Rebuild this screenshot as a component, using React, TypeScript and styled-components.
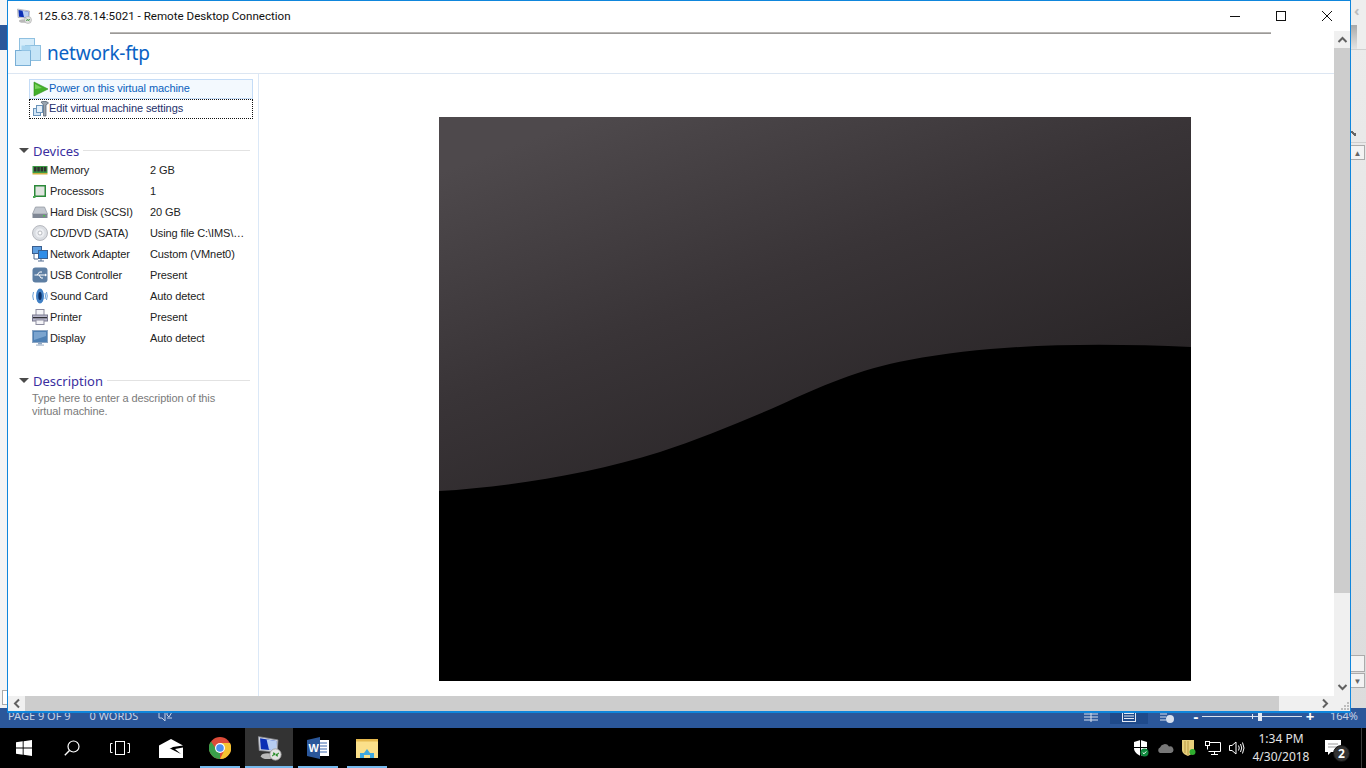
import React, { FC, ReactNode } from "react";
import styled, { createGlobalStyle } from "styled-components";

const GlobalStyle = createGlobalStyle`
    html, body { margin: 0; padding: 0; background: #000; }
    #root { width: 1366px; height: 768px; overflow: hidden; }
    * { box-sizing: border-box; }
`;

/* ---------- small drawings ---------- */

const Svg: FC<{ s?: number; w?: number; h?: number; children: ReactNode }> = ({ s = 16, w, h, children }) => (
    <svg width={w ?? s} height={h ?? s} viewBox={`0 0 ${w ?? s} ${h ?? s}`} style={{ display: "block", flex: "none" }}>
        {children}
    </svg>
);

const RdpIcon: FC<{ s?: number }> = ({ s = 16 }) => (
    <svg width={s} height={s} viewBox="0 0 32 32" style={{ display: "block", flex: "none" }}>
        <path d="M3 2 L27 6 L26 21 L4 19 Z" fill="#d5d9e2" stroke="#8d8f96" />
        <path d="M5 4 L25 7.5 L24.5 19 L6 17.5 Z" fill="#0a2fb5" />
        <path d="M13 5.5 L25 7.5 L24.5 19 L16 18 Z" fill="#b7cdf1" />
        <ellipse cx="14" cy="26" rx="8" ry="3.5" fill="#b9b9b9" />
        <circle cx="24" cy="24" r="7" fill="#e3e3e3" stroke="#9a9a9a" />
        <path d="M20 26 L23 23 M21 22 L23 23 L23 25 M28 22 L25 25 M27 26 L25 25 L25 23" stroke="#2f8f2f" strokeWidth="1.4" fill="none" />
    </svg>
);

const VmIcon = () => (
    <Svg w={28} h={30}>
        <rect x="5.5" y="1.5" width="15" height="15" fill="#d5ecfa" stroke="#8fc0e0" />
        <rect x="11.5" y="8.5" width="15" height="15" fill="#c5e4f7" stroke="#8fc0e0" />
        <rect x="1.5" y="13.5" width="15" height="15" fill="#cbe7f8" stroke="#79afd6" />
        <rect x="7.5" y="8.5" width="9" height="5" fill="#a9d5f0" />
    </Svg>
);

const PlayIcon = () => (
    <Svg>
        <path d="M1 1 L15 8 L1 15 Z" fill="#43b02a" stroke="#2f8f1b" strokeWidth="0.6" />
        <path d="M2 3 L9 7 L2 8 Z" fill="#79d25d" />
    </Svg>
);

const SettingsIcon = () => (
    <Svg>
        <rect x="0.5" y="7.5" width="7" height="7" fill="#cfe4f5" stroke="#6a93ba" />
        <rect x="3.5" y="4.5" width="6" height="7" fill="#e4f0fa" stroke="#6a93ba" />
        <path d="M8 1 C 10 0 14 0 15.5 2 L13 4 L13 15 L10.5 15 L10.5 4 Z" fill="#98a4b0" stroke="#4d5a68" strokeWidth="0.7" />
    </Svg>
);

const MemoryIcon = () => (
    <Svg>
        <rect x="0.5" y="4" width="15" height="7" fill="#3c9a45" />
        <rect x="2" y="5" width="2.5" height="4.5" fill="#303030" />
        <rect x="5.3" y="5" width="2.5" height="4.5" fill="#303030" />
        <rect x="8.6" y="5" width="2.5" height="4.5" fill="#303030" />
        <rect x="11.9" y="5" width="2.5" height="4.5" fill="#303030" />
        <rect x="0.5" y="11" width="15" height="1.5" fill="#d0b040" />
    </Svg>
);

const CpuIcon = () => (
    <Svg>
        <rect x="2" y="2" width="12" height="12" fill="#2c8a3a" />
        <rect x="3.5" y="3.5" width="9" height="9" fill="#e0e4e0" />
        <rect x="1" y="13" width="2.5" height="2" fill="#48a850" />
    </Svg>
);

const DiskIcon = () => (
    <Svg>
        <path d="M3.5 3 L12.5 3 L15.5 10 L0.5 10 Z" fill="#c3c8d0" stroke="#8d939c" strokeWidth="0.7" />
        <rect x="0.5" y="10" width="15" height="4" fill="#7f8794" />
        <rect x="11" y="11" width="2" height="1.5" fill="#4fc04f" />
    </Svg>
);

const CdIcon = () => (
    <Svg>
        <circle cx="8" cy="8" r="7.5" fill="#dadde2" stroke="#a0a4aa" strokeWidth="0.7" />
        <circle cx="8" cy="8" r="4.5" fill="#eceef2" />
        <circle cx="8" cy="8" r="2" fill="#fff" stroke="#a0a4aa" strokeWidth="0.7" />
    </Svg>
);

const NetworkIcon = () => (
    <Svg>
        <rect x="0.5" y="0.5" width="9" height="7" fill="#5f9fe0" stroke="#3a5f90" />
        <rect x="6.5" y="4.5" width="9" height="8" fill="#2f8de8" stroke="#3a5f90" />
        <path d="M2 8 L2 13 L6 13 M9 13 L9 15 M6 15 L12 15" stroke="#506a90" fill="none" />
    </Svg>
);

const UsbIcon = () => (
    <Svg>
        <rect x="0.5" y="0.5" width="15" height="15" rx="3" fill="#5d7ea3" />
        <path d="M2.5 8 L13 8 M5 8 L7.5 5 L10 5 M7 8 L9 11 L11 11" stroke="#fff" strokeWidth="1" fill="none" />
        <path d="M13 6.5 L15 8 L13 9.5 Z" fill="#fff" />
    </Svg>
);

const SoundIcon = () => (
    <Svg>
        <ellipse cx="8" cy="8" rx="4" ry="7.5" fill="#3f7fc4" />
        <ellipse cx="8" cy="8" rx="1.7" ry="4" fill="#0c2f66" />
        <path d="M1.5 4 Q 0 8 1.5 12 M14.5 4 Q 16 8 14.5 12 M13 5 Q 14 8 13 11" stroke="#6aa0d8" fill="none" />
    </Svg>
);

const PrinterIcon = () => (
    <Svg>
        <rect x="4" y="0.5" width="8" height="6" fill="#f4f4f8" stroke="#8d8da0" />
        <rect x="0.5" y="6" width="15" height="6" fill="#b9b8cc" stroke="#7a7a90" />
        <rect x="1" y="8" width="14" height="1.3" fill="#303038" />
        <rect x="4" y="11" width="8" height="4.5" fill="#f4f4f8" stroke="#8d8da0" />
    </Svg>
);

const DisplayIcon = () => (
    <Svg>
        <rect x="0.5" y="0.5" width="15" height="12" fill="#4f80b4" stroke="#8ca6c4" />
        <path d="M2 2 L14 2 L14 6 L2 10 Z" fill="#7ba4cf" />
        <rect x="6" y="13" width="4" height="1.5" fill="#8ca6c4" />
        <rect x="4" y="14.5" width="8" height="1.2" fill="#a8b8cc" />
    </Svg>
);

/* scrollbar chevron, dir is the way it points */
const Chevron: FC<{ dir: "up" | "down" | "left" | "right" }> = ({ dir }) => {
    const rotate = { up: 0, right: 90, down: 180, left: 270 }[dir];
    return (
        <svg width="11" height="11" viewBox="0 0 11 11" style={{ display: "block", transform: `rotate(${rotate}deg)` }}>
            <path d="M1.5 8 L5.5 4 L9.5 8" stroke="#606060" strokeWidth="2" fill="none" />
        </svg>
    );
};

/* ---------- page shell ---------- */

const Screen = styled.div`
    position: relative;
    width: 1366px;
    height: 768px;
    display: flex;
    flex-direction: column;
    overflow: hidden;
    font-family: "Noto Sans", "Open Sans", sans-serif;
`;

const WordArea = styled.div`
    flex: 1;
    display: flex;
    justify-content: space-between;
    background: #f1f1f1;
`;

const WordLeft = styled.div`
    width: 7px;
    display: flex;
    flex-direction: column;
    background: #f4f4f4;
`;

const WordTabStrip = styled.div`
    height: 25px;
    background: #f6f6f6;
`;

const WordBlueBand = styled.div`
    height: 25px;
    background: #2b579a;
    margin-bottom: 640px;
`;

const WordSideBox = styled.div`
    height: 15px;
    margin-left: 2px;
    border: 1px solid #ababab;
    border-right: 0;
    background: #fff;
`;

const WordRight = styled.div`
    width: 15px;
    display: flex;
    flex-direction: column;
    background: linear-gradient(#ececec, #dcdcdc);
`;

const WordRibbon = styled.div`
    height: 50px;
    flex: none;
    position: relative;
    border-bottom: 1px solid #d0d0d0;
    background: #eeeeee;
`;

const RibbonBar = styled.div`
    position: absolute;
    left: 0;
    top: 25px;
    width: 6px;
    height: 24px;
    background: linear-gradient(#a9a9a9, #e4e4e4);
`;

const RibbonMark = styled.div`
    position: absolute;
    left: 3px;
    top: 3px;
    color: #bdbdbd;
    font-size: 15px;
    font-weight: 700;
    line-height: 14px;
`;

const ResizeTick = styled.div`
    width: 5px;
    height: 5px;
    margin-top: 81px;
    flex: none;
    background: linear-gradient(45deg, transparent 30%, #666 30%, #666 70%, transparent 70%);
`;

const WordGroupRule = styled.div`
    height: 1px;
    margin-top: 6px;
    flex: none;
    background: #cfcfcf;
`;

const WordSpinBox = styled.div<{ $top: number; $h: number }>`
    height: ${(p) => p.$h}px;
    flex: none;
    margin-top: ${(p) => p.$top}px;
    margin-right: 1px;
    border: 1px solid #ababab;
    border-left: 0;
    background: #f3f3f3;
    display: flex;
    align-items: center;
    justify-content: center;
    color: #666;
    font-size: 8px;
`;

const StatusBar = styled.div`
    height: 20px;
    flex: none;
    display: flex;
    align-items: center;
    background: #2b579a;
    color: #c6d3e8;
    font-size: 11px;
    padding: 0 0 5px 8px;
    position: relative;
`;

const StatusText = styled.span<{ $gap: number }>`
    margin-right: ${(p) => p.$gap}px;
    white-space: nowrap;
`;

const StatusRight = styled.div`
    margin-left: auto;
    display: flex;
    align-items: center;
    height: 16px;
    margin-top: 1px;
    padding-right: 8px;
`;

const ViewBtn = styled.div<{ $on?: boolean }>`
    width: 38px;
    height: 16px;
    display: flex;
    align-items: center;
    justify-content: center;
    background: ${(p) => (p.$on ? "#1f4a8a" : "transparent")};
`;

const ZoomLabel = styled.span`
    margin-left: 14px;
    font-size: 11px;
    line-height: 16px;
`;

const ZoomTrack = styled.div`
    position: relative;
    width: 100px;
    height: 1px;
    margin-right: 2px;
    background: #d9e2f0;
`;

const ZoomThumb = styled.div<{ $x: number; $w: number; $h: number }>`
    position: absolute;
    left: ${(p) => p.$x}px;
    top: ${(p) => -Math.floor(p.$h / 2)}px;
    width: ${(p) => p.$w}px;
    height: ${(p) => p.$h}px;
    background: #e4eaf4;
`;

const ZoomSign = styled.span<{ $lead?: number }>`
    color: #fff;
    font-size: 15px;
    font-weight: 700;
    line-height: 16px;
    width: 12px;
    margin-left: ${(p) => p.$lead ?? 0}px;
    text-align: center;
`;

/* ---------- remote desktop window ---------- */

const RemoteWindow = styled.div`
    position: absolute;
    left: 7px;
    top: 0;
    width: 1344px;
    height: 713px;
    border: 1px solid #0f86dc;
    border-width: 1px 1px 2px 1px;
    background: #fff;
    display: flex;
    flex-direction: column;
`;

const TitleBar = styled.div`
    height: 30px;
    flex: none;
    display: flex;
    align-items: center;
    padding-left: 8px;
    color: #111;
    font-family: "Roboto", "Noto Sans", sans-serif;
    font-size: 11.6px;
`;

const TitleText = styled.span`
    margin-left: 6px;
    white-space: nowrap;
`;

const WindowControls = styled.div`
    margin-left: auto;
    display: flex;
`;

const WindowControl = styled.div`
    width: 46px;
    height: 30px;
    display: flex;
    align-items: center;
    justify-content: center;
`;

const ConnectionBarShadow = styled.div`
    position: absolute;
    left: 102px;
    top: 31px;
    width: 1161px;
    height: 2px;
    background: linear-gradient(#c9c7c4, #8c8a88);
`;

const Remote = styled.div`
    flex: 1;
    min-height: 0;
    display: flex;
`;

const VmPane = styled.div`
    flex: 1;
    min-width: 0;
    display: flex;
    flex-direction: column;
`;

const VmHeader = styled.div`
    height: 43px;
    flex: none;
    display: flex;
    align-items: center;
    padding-left: 6px;
    border-bottom: 1px solid #dce6f2;
`;

const VmTitle = styled.h1`
    margin: 2px 0 0 5px;
    font-size: 19px;
    font-weight: 400;
    color: #0a62c4;
    letter-spacing: -0.2px;
`;

const VmBody = styled.div`
    flex: 1;
    min-height: 0;
    display: flex;
`;

const Sidebar = styled.div`
    width: 251px;
    flex: none;
    border-right: 1px solid #dbe8f7;
    padding: 5px 5px 0 21px;
    font-family: "Liberation Sans", Arial, sans-serif;
    font-size: 11px;
    letter-spacing: -0.1px;
    color: #222;
`;

const Command = styled.div<{ $hover?: boolean }>`
    height: 20px;
    display: flex;
    align-items: center;
    padding-left: 3px;
    border: 1px ${(p) => (p.$hover ? "solid #c4dcf7" : "dotted #111")};
    background: ${(p) => (p.$hover ? "#f3f9fe" : "#fff")};
    color: ${(p) => (p.$hover ? "#0a5fbd" : "#222f6b")};
`;

const CommandLabel = styled.span`
    white-space: nowrap;
    margin-bottom: 3px;
`;

const SectionHead = styled.div<{ $top: number }>`
    display: flex;
    align-items: center;
    margin: ${(p) => p.$top}px 3px 0 -10px;
    height: 17px;
`;

const SectionArrow = styled.div`
    width: 0;
    height: 0;
    border-style: solid;
    border-width: 5px 5px 0 5px;
    border-color: #4a4a4a transparent transparent transparent;
`;

const SectionName = styled.span`
    margin: 0 4px;
    font-family: "Noto Sans", sans-serif;
    font-size: 13px;
    letter-spacing: 0;
    color: #3a2fa0;
`;

const SectionRule = styled.div`
    flex: 1;
    height: 1px;
    background: #e2e2e2;
`;

const DeviceList = styled.div`
    margin: 0;
`;

const DeviceRow = styled.div`
    height: 21px;
    display: flex;
    align-items: center;
    padding-left: 3px;
    color: #222;
`;

const DeviceName = styled.span`
    width: 100px;
    margin-left: 2px;
    white-space: nowrap;
`;

const DeviceValue = styled.span`
    white-space: nowrap;
`;

const Description = styled.p`
    margin: 3px 0 0 3px;
    width: 200px;
    font-size: 11px;
    line-height: 13px;
    color: #7a7a7a;
`;

const Stage = styled.div`
    flex: 1;
    min-width: 0;
    padding: 43px 0 0 180px;
`;

const VScroll = styled.div`
    width: 16px;
    flex: none;
    display: flex;
    flex-direction: column;
    background: #f0f0f0;
`;

const VThumb = styled.div`
    height: 545px;
    background: #cdcdcd;
`;

const ScrollBtn = styled.div`
    height: 17px;
    display: flex;
    align-items: center;
    justify-content: center;
    background: #f0f0f0;
`;

const VTrack = styled.div`
    flex: 1;
`;

const HScroll = styled.div`
    height: 15px;
    flex: none;
    display: flex;
    background: #f0f0f0;
`;

const HBtn = styled.div`
    width: 17px;
    display: flex;
    align-items: center;
    justify-content: center;
`;

const HThumb = styled.div`
    width: 1254px;
    background: #cdcdcd;
`;

const HTrack = styled.div`
    flex: 1;
`;

const Gripper = styled.div`
    width: 16px;
    display: flex;
    align-items: flex-end;
    justify-content: flex-end;
`;

/* ---------- taskbar ---------- */

const Taskbar = styled.div`
    height: 40px;
    flex: none;
    display: flex;
    background: #000;
    color: #ddd;
`;

const TaskCell = styled.div<{ $active?: boolean; $open?: boolean }>`
    position: relative;
    width: 48px;
    height: 40px;
    display: flex;
    align-items: center;
    justify-content: center;
    background: ${(p) => (p.$active ? "#333" : "transparent")};
    &::after {
        content: "";
        display: ${(p) => (p.$open ? "block" : "none")};
        position: absolute;
        bottom: 0;
        left: ${(p) => (p.$active ? 0 : 4)}px;
        right: ${(p) => (p.$active ? 0 : 4)}px;
        height: 2px;
        background: #76b9ed;
    }
`;

const TaskList = styled.div`
    display: flex;
    gap: 1px;
    margin-left: 3px;
`;

const Tray = styled.div`
    margin-left: auto;
    display: flex;
    align-items: center;
`;

const TrayIcon = styled.div`
    width: 24px;
    height: 40px;
    display: flex;
    align-items: center;
    justify-content: center;
`;

const Clock = styled.div`
    width: 64px;
    text-align: center;
    font-size: 12px;
    line-height: 18px;
    color: #e4e4e4;
    white-space: nowrap;
`;

const Notify = styled.div`
    position: relative;
    width: 40px;
    height: 40px;
    display: flex;
    align-items: center;
    justify-content: center;
`;

const NotifyBadge = styled.div`
    position: absolute;
    left: 20px;
    top: 17px;
    width: 17px;
    height: 17px;
    border-radius: 50%;
    background: #333;
    border: 1px solid #111;
    color: #fff;
    font-size: 12px;
    font-weight: 700;
    line-height: 15px;
    text-align: center;
`;

const ShowDesktop = styled.div`
    width: 13px;
    height: 40px;
    padding-left: 8px;
    &::before {
        content: "";
        display: block;
        width: 1px;
        height: 40px;
        background: #3a3a3a;
    }
`;

const devices: { icon: ReactNode; name: string; value: string }[] = [
    { icon: <MemoryIcon />, name: "Memory", value: "2 GB" },
    { icon: <CpuIcon />, name: "Processors", value: "1" },
    { icon: <DiskIcon />, name: "Hard Disk (SCSI)", value: "20 GB" },
    { icon: <CdIcon />, name: "CD/DVD (SATA)", value: "Using file C:\\IMS\\…" },
    { icon: <NetworkIcon />, name: "Network Adapter", value: "Custom (VMnet0)" },
    { icon: <UsbIcon />, name: "USB Controller", value: "Present" },
    { icon: <SoundIcon />, name: "Sound Card", value: "Auto detect" },
    { icon: <PrinterIcon />, name: "Printer", value: "Present" },
    { icon: <DisplayIcon />, name: "Display", value: "Auto detect" },
];

const App: FC = () => (
    <Screen>
        <GlobalStyle />
        <WordArea>
            <WordLeft>
                <WordTabStrip />
                <WordBlueBand />
                <WordSideBox />
            </WordLeft>
            <WordRight>
                <WordRibbon>
                    <RibbonMark>‹</RibbonMark>
                    <RibbonBar />
                </WordRibbon>
                <ResizeTick />
                <WordGroupRule />
                <WordSpinBox $top={2} $h={15}>▲</WordSpinBox>
                <WordSpinBox $top={495} $h={17}></WordSpinBox>
                <WordSpinBox $top={1} $h={15}>▼</WordSpinBox>
            </WordRight>
        </WordArea>

        <StatusBar>
            <StatusText $gap={19}>PAGE 9 OF 9</StatusText>
            <StatusText $gap={20}>0 WORDS</StatusText>
            <Svg w={15} h={14}>
                <path d="M1 1 L1 9 L4 9 L7 12 L7 1 Z M9 1 L9 6 L11 8 L14 3 M9 9 L14 9" stroke="#c6d3e8" fill="none" />
            </Svg>
            <StatusRight>
                <ViewBtn>
                    <Svg w={14} h={12}>
                        <path d="M0 1 H14 M0 4 H14 M0 7 H14 M0 10 H14 M7 0 V12" stroke="#d7e0ee" fill="none" />
                    </Svg>
                </ViewBtn>
                <ViewBtn $on>
                    <Svg w={14} h={12}>
                        <rect x="0.5" y="0.5" width="13" height="11" stroke="#e4eaf4" fill="none" />
                        <path d="M2 3.5 H12 M2 6 H12 M2 8.5 H12" stroke="#e4eaf4" />
                    </Svg>
                </ViewBtn>
                <ViewBtn>
                    <Svg w={14} h={13}>
                        <path d="M0 1 H10 M0 4 H7 M0 7 H6 M0 10 H6" stroke="#d7e0ee" fill="none" />
                        <circle cx="10" cy="9" r="4" fill="#d7e0ee" />
                    </Svg>
                </ViewBtn>
                <ZoomSign $lead={4}>-</ZoomSign>
                <ZoomTrack>
                    <ZoomThumb $x={50} $w={1} $h={5} />
                    <ZoomThumb $x={56} $w={4} $h={9} />
                </ZoomTrack>
                <ZoomSign>+</ZoomSign>
                <ZoomLabel>164%</ZoomLabel>
            </StatusRight>
        </StatusBar>

        <Taskbar>
            <TaskCell>
                <Svg>
                    <path d="M0 2.3 L6.7 1.3 V7.5 H0 Z M7.6 1.2 L16 0 V7.5 H7.6 Z M0 8.5 H6.7 V14.7 L0 13.7 Z M7.6 8.5 H16 V16 L7.6 14.8 Z" fill="#fff" />
                </Svg>
            </TaskCell>
            <TaskCell>
                <Svg>
                    <circle cx="9.5" cy="6.5" r="5.5" stroke="#fff" strokeWidth="1.2" fill="none" />
                    <path d="M5.5 10.5 L0.8 15.2" stroke="#fff" strokeWidth="1.4" />
                </Svg>
            </TaskCell>
            <TaskCell>
                <Svg w={20} h={14}>
                    <rect x="5.5" y="0.5" width="9" height="13" stroke="#fff" fill="none" />
                    <path d="M2.5 2.5 H0.5 V11.5 H2.5 M17.5 2.5 H19.5 V11.5 H17.5" stroke="#fff" fill="none" />
                </Svg>
            </TaskCell>
            <TaskList>
                <TaskCell>
                    <Svg w={24} h={19}>
                        <path d="M0 6.5 L12 0 L24 6.5 L14 8 L0 16 Z" fill="#fff" />
                        <path d="M0 8.5 L0 19 L24 19 L24 8.5 L16 10 L22 15 L12 10 Z" fill="#fff" />
                    </Svg>
                </TaskCell>
                <TaskCell $open>
                    <Svg s={22}>
                        <circle cx="11" cy="11" r="11" fill="#dd4b39" />
                        <path d="M11 11 L1.6 16.8 A11 11 0 0 0 11 22 Z" fill="#3a9f4a" />
                        <path d="M1.6 16.8 A11 11 0 0 1 2 4.5 L7 12 L11 22 Z" fill="#3a9f4a" />
                        <path d="M11 6 H21 A11 11 0 0 1 11 22 L15.5 13 Z" fill="#f5c431" />
                        <circle cx="11" cy="11" r="5" fill="#fff" />
                        <circle cx="11" cy="11" r="3.8" fill="#4d8ff0" />
                    </Svg>
                </TaskCell>
                <TaskCell $active $open>
                    <RdpIcon s={26} />
                </TaskCell>
                <TaskCell $open>
                    <Svg w={22} h={22}>
                        <rect x="9" y="3" width="13" height="16" fill="#fff" />
                        <path d="M11 6 H20 M11 9 H20 M11 12 H20 M11 15 H20" stroke="#3a66ad" />
                        <path d="M0 3 L13 0 V22 L0 19 Z" fill="#2b579a" />
                        <text x="1.5" y="15" fontSize="11" fontWeight="700" fill="#fff" fontFamily="Liberation Sans, sans-serif">W</text>
                    </Svg>
                </TaskCell>
                <TaskCell $open>
                    <Svg w={22} h={20}>
                        <path d="M0 1 H8 L10 3 H22 V20 H0 Z" fill="#fbe08a" />
                        <rect x="0" y="1" width="22" height="2.5" fill="#e6b94e" />
                        <path d="M4 20 V15 H8 L11 11 L14 15 H18 V20 H14 V17 H8 V20 Z" fill="#3fa8df" />
                    </Svg>
                </TaskCell>
            </TaskList>
            <Tray>
                <TrayIcon>
                    <Svg w={16} h={17}>
                        <path d="M1 2 L7.5 0 L14 2 V8 C14 12 11 14 7.5 16 C4 14 1 12 1 8 Z" fill="#fff" />
                        <path d="M7.5 0 V16 M1 7.5 H14" stroke="#000" strokeWidth="1" />
                        <circle cx="11.5" cy="12.5" r="4" fill="#10893e" />
                        <path d="M9.7 12.5 L11 13.8 L13.3 11.4" stroke="#fff" fill="none" />
                    </Svg>
                </TrayIcon>
                <TrayIcon>
                    <Svg w={17} h={10}>
                        <path d="M3 10 A3 3 0 0 1 3 4.5 A5 5 0 0 1 12 3.5 A3.3 3.3 0 0 1 14 10 Z" fill="#777" />
                    </Svg>
                </TrayIcon>
                <TrayIcon>
                    <Svg w={15} h={17}>
                        <path d="M0 0 H12 V10 C12 13 8 15 6 16 C3 15 0 13 0 10 Z" fill="#e8cf7c" />
                        <path d="M3 1 V13 M6 1 V15" stroke="#b89a45" />
                        <circle cx="10.5" cy="12" r="3" fill="#2fae2f" />
                    </Svg>
                </TrayIcon>
                <TrayIcon>
                    <Svg w={16} h={14}>
                        <path d="M3.5 1.5 H15.5 V10.5 H3.5 M9.5 10.5 V13.5 M6 13.5 H13" stroke="#fff" fill="none" />
                        <rect x="0.5" y="0.5" width="4" height="4" stroke="#fff" fill="#000" />
                        <path d="M2.5 4.5 V8.5" stroke="#fff" />
                    </Svg>
                </TrayIcon>
                <TrayIcon>
                    <Svg w={16} h={14}>
                        <path d="M0.5 4.5 H3 L7 1 V13 L3 9.5 H0.5 Z" stroke="#fff" fill="none" />
                        <path d="M9.5 4.5 Q11 7 9.5 9.5 M11.5 3 Q14 7 11.5 11 M13.5 1.5 Q16.5 7 13.5 12.5" stroke="#fff" fill="none" />
                    </Svg>
                </TrayIcon>
                <Clock>
                    1:34 PM
                    <br />
                    4/30/2018
                </Clock>
                <Notify>
                    <Svg w={17} h={16}>
                        <path d="M0 0 H16 V12 H6 L3 15 V12 H0 Z" fill="#fff" />
                        <path d="M3 4 H13 M3 7 H13" stroke="#999" />
                    </Svg>
                    <NotifyBadge>2</NotifyBadge>
                </Notify>
                <ShowDesktop />
            </Tray>
        </Taskbar>

        <RemoteWindow>
            <TitleBar>
                <RdpIcon />
                <TitleText>125.63.78.14:5021 - Remote Desktop Connection</TitleText>
                <WindowControls>
                    <WindowControl>
                        <Svg w={10} h={10}>
                            <path d="M0 5.5 H10" stroke="#111" />
                        </Svg>
                    </WindowControl>
                    <WindowControl>
                        <Svg w={10} h={10}>
                            <rect x="0.5" y="0.5" width="9" height="9" stroke="#111" fill="none" />
                        </Svg>
                    </WindowControl>
                    <WindowControl>
                        <Svg w={10} h={10}>
                            <path d="M0 0 L10 10 M10 0 L0 10" stroke="#111" />
                        </Svg>
                    </WindowControl>
                </WindowControls>
            </TitleBar>
            <ConnectionBarShadow />
            <Remote>
                <VmPane>
                    <VmHeader>
                        <VmIcon />
                        <VmTitle>network-ftp</VmTitle>
                    </VmHeader>
                    <VmBody>
                        <Sidebar>
                            <Command $hover>
                                <PlayIcon />
                                <CommandLabel>Power on this virtual machine</CommandLabel>
                            </Command>
                            <Command>
                                <SettingsIcon />
                                <CommandLabel>Edit virtual machine settings</CommandLabel>
                            </Command>
                            <SectionHead $top={23}>
                                <SectionArrow />
                                <SectionName>Devices</SectionName>
                                <SectionRule />
                            </SectionHead>
                            <DeviceList>
                                {devices.map((d) => (
                                    <DeviceRow key={d.name}>
                                        {d.icon}
                                        <DeviceName>{d.name}</DeviceName>
                                        <DeviceValue>{d.value}</DeviceValue>
                                    </DeviceRow>
                                ))}
                            </DeviceList>
                            <SectionHead $top={24}>
                                <SectionArrow />
                                <SectionName>Description</SectionName>
                                <SectionRule />
                            </SectionHead>
                            <Description>Type here to enter a description of this virtual machine.</Description>
                        </Sidebar>
                        <Stage>
                            <svg width="752" height="564" viewBox="0 0 752 564" style={{ display: "block" }}>
                                <defs>
                                    <linearGradient id="sky" x1="150" y1="0" x2="300" y2="400" gradientUnits="userSpaceOnUse">
                                        <stop offset="0" stopColor="#4e494c" />
                                        <stop offset="0.5" stopColor="#393437" />
                                        <stop offset="1" stopColor="#292527" />
                                    </linearGradient>
                                </defs>
                                <rect width="752" height="564" fill="#000" />
                                <path
                                    d="M0 0 H752 V230 C660 226 560 226 470 243 C420 252 380 270 341 288 C300 306 260 322 221 335 C150 357 70 370 0 374 Z"
                                    fill="url(#sky)"
                                />
                            </svg>
                        </Stage>
                    </VmBody>
                </VmPane>
                <VScroll>
                    <ScrollBtn>
                        <Chevron dir="up" />
                    </ScrollBtn>
                    <VThumb />
                    <VTrack />
                    <ScrollBtn>
                        <Chevron dir="down" />
                    </ScrollBtn>
                </VScroll>
            </Remote>
            <HScroll>
                <HBtn>
                    <Chevron dir="left" />
                </HBtn>
                <HThumb />
                <HTrack />
                <HBtn>
                    <Chevron dir="right" />
                </HBtn>
                <Gripper>
                    <Svg s={10}>
                        <path d="M7 1 H9 V3 H7 Z M4 4 H6 V6 H4 Z M7 4 H9 V6 H7 Z M1 7 H3 V9 H1 Z M4 7 H6 V9 H4 Z M7 7 H9 V9 H7 Z" fill="#bdbdbd" />
                    </Svg>
                </Gripper>
            </HScroll>
        </RemoteWindow>
    </Screen>
);

export default App;
